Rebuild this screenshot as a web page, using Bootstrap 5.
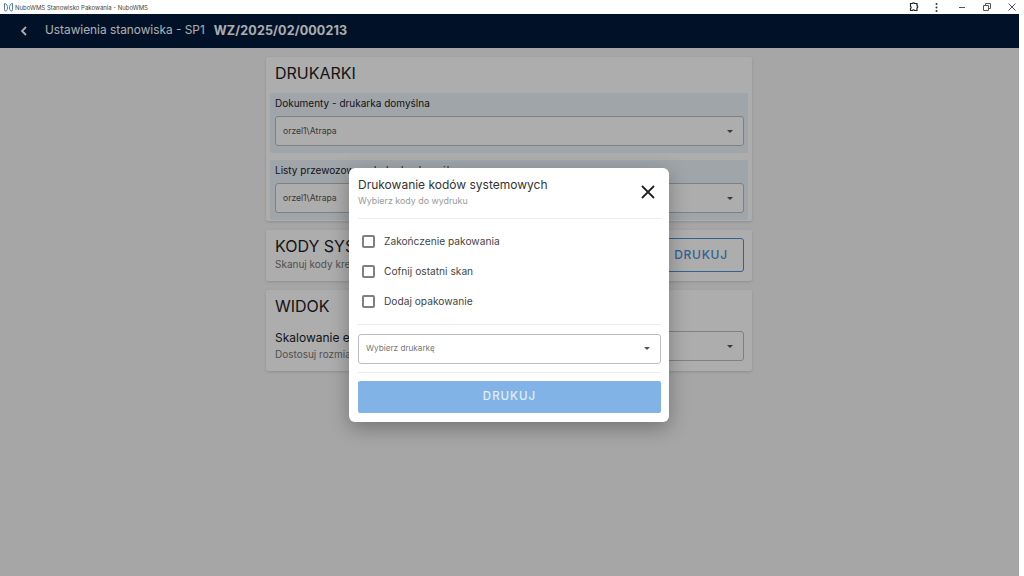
<!DOCTYPE html>
<html lang="pl">
<head>
  <meta charset="UTF-8">
  <meta name="viewport" content="width=device-width, initial-scale=1">
  <title>NuboWMS Stanowisko Pakowania - NuboWMS</title>
  <link href="https://cdn.jsdelivr.net/npm/bootstrap@5.3.2/dist/css/bootstrap.min.css" rel="stylesheet">
  <style>
    html, body {
      height: 100%;
      overflow: hidden;
    }
    body {
      background: #fff;
      font-family: "Inter", "Liberation Sans", sans-serif;
      color: #212121;
    }
    .win-bar {
      height: 14px;
      font-size: 6px;
      color: #444;
      padding-left: 4px;
    }
    .win-logo {
      margin-right: 2px;
    }
    .win-btn {
      width: 25px;
      height: 14px;
    }
    .app-shell {
      width: 1019px;
      height: 562px;
      background: #f5f5f5;
      position: relative;
    }
    .app-top {
      height: 34px;
      background: #001a3c;
      color: #fff;
      padding-left: 20px;
      font-size: 11.850px;
    }
    .app-top b {
      font-size: 12.500px;
      font-weight: 700;
      letter-spacing: .15px;
      margin-left: 9px;
    }
    .back-arrow {
      width: 8px;
      height: 12px;
      margin-right: 17px;
    }
    .page-col {
      width: 486px;
      margin: 9px 0 0 266px;
      gap: 9px;
    }
    .set-card {
      background: #fff;
      border: 0;
      border-radius: 2px;
      box-shadow: 0 1px 3px rgba(0, 0, 0, .15);
    }
    .card-one {
      height: 164px;
    }
    .card-two {
      height: 51px;
      padding: 6px 8px 0 9px;
    }
    .card-three {
      height: 81px;
      padding: 6px 8px 0 9px;
    }
    .card-ttl {
      font-size: 16px;
      font-weight: 400;
      line-height: 20px;
      margin: 0;
    }
    .card-one .card-ttl {
      padding: 6px 0 0 9px;
      margin-bottom: 10px;
    }
    .card-sub {
      font-size: 10px;
      line-height: 14px;
      margin-top: 1px;
      color: #777;
    }
    .set-name {
      font-size: 12px;
      line-height: 16px;
    }
    .view-row {
      margin-top: 14px;
    }
    .printer-box {
      background: #ecf3fa;
      margin: 0 4px;
      padding: 0 4px 7px 5px;
      border-radius: 2px;
    }
    .printer-box + .printer-box {
      margin-top: 7px;
    }
    .printer-box label {
      font-size: 10px;
      line-height: 20px;
      margin-bottom: 3px;
      display: block;
    }
    .sel-box {
      height: 30px;
      background: #fff;
      border: 1px solid #bdbdbd;
      border-radius: 3px;
      padding: 0 10px 0 7px;
      font-size: 8.600px;
      color: #555;
    }
    .sel-box-wide {
      width: 170px;
    }
    .hint-text {
      font-size: 8.200px;
      color: #777;
    }
    .sel-caret {
      width: 0;
      height: 0;
      border-left: 3px solid transparent;
      border-right: 3px solid transparent;
      border-top: 3px solid #555;
    }
    .btn-print-out {
      width: 86px;
      height: 34px;
      margin-top: 2px;
      font-size: 12px;
      font-weight: 500;
      letter-spacing: .7px;
      color: #4a90d9;
      border: 1px solid #4a90d9;
      border-radius: 3px;
      padding: 0;
    }
    .dim-layer {
      position: absolute;
      inset: 0;
      padding: 0 1px 1px 0;
      background: rgba(0, 0, 0, .32);
    }
    .print-dlg {
      width: 320px;
      height: 254px;
      background: #fff;
      border-radius: 6px;
      padding: 8px 8px 8px 9px;
      box-shadow: 0 6px 20px rgba(0, 0, 0, .3);
    }
    .dlg-ttl {
      font-size: 12px;
      font-weight: 400;
      line-height: 18px;
      margin: 0;
      color: #333;
    }
    .dlg-sub {
      font-size: 8.900px;
      line-height: 13px;
      color: #999;
    }
    .dlg-close {
      margin: 9px 6px 0 0;
    }
    .dlg-line {
      margin: 0;
      border-color: #ececec;
      opacity: 1;
    }
    .line-a {
      margin: 11px 0 8px;
    }
    .line-b {
      margin: 7px 0 9px;
    }
    .line-c {
      margin: 8px 0;
    }
    .dlg-check {
      height: 30px;
      padding-left: 4px;
      font-size: 10.200px;
      color: #444;
      gap: 9px;
    }
    .dlg-check .form-check-input {
      width: 13px;
      height: 13px;
      margin: 0;
      border: 2px solid #808080;
      border-radius: 2px;
    }
    .btn-print-main {
      height: 32px;
      font-size: 11.500px;
      font-weight: 500;
      letter-spacing: 1px;
      padding: 0;
      border: 0;
      border-radius: 2px;
      --bs-btn-disabled-bg: #82b3e6;
      --bs-btn-disabled-color: #e3eefa;
      --bs-btn-disabled-opacity: 1;
    }
  </style>
</head>
<body>

<div class="win-bar d-flex align-items-center justify-content-between">
  <div class="d-flex align-items-center">
    <svg class="win-logo" width="9" height="10" viewBox="0 0 9 10" fill="none" stroke="#3a6ea5" stroke-width=".9"><path d="M.5 1.500c2 0 3 2 3 4.500 0 2-1 3-2 3s-1-1-1-3zM8.500 1.500c-2 0-3 2-3 4.500 0 2 1 3 2 3s1-1 1-3z"/></svg>
    <span>NuboWMS Stanowisko Pakowania - NuboWMS</span>
  </div>
  <div class="d-flex">
    <div class="win-btn d-flex align-items-center justify-content-center">
      <svg class="ms-1" width="10" height="10" viewBox="0 0 10 10" fill="none" stroke="#222" stroke-width="1.200"><path d="M1.500 1.500h2c.3-1 1.700-1 2 0h2.500v2.300c1 .3 1 1.900 0 2.200v2.500h-2.500c-.3-1-1.700-1-2 0h-2v-2c.8-.4.8-1.600 0-2z"/></svg>
    </div>
    <div class="win-btn d-flex align-items-center justify-content-center">
      <svg width="3" height="9" viewBox="0 0 3 9" fill="#333"><circle cx="1.500" cy="1" r="1"/><circle cx="1.500" cy="4.500" r="1"/><circle cx="1.500" cy="8" r="1"/></svg>
    </div>
    <div class="win-btn d-flex align-items-center justify-content-center">
      <svg width="8" height="8" viewBox="0 0 8 8" stroke="#555"><path d="M1 4.500h6"/></svg>
    </div>
    <div class="win-btn d-flex align-items-center justify-content-center">
      <svg width="8" height="8" viewBox="0 0 8 8" fill="none" stroke="#555"><path d="M.5 2.500h5v5h-5zM2.500 2.500v-2h5v5h-2"/></svg>
    </div>
    <div class="win-btn d-flex align-items-center justify-content-center">
      <svg width="8" height="8" viewBox="0 0 8 8" stroke="#555"><path d="M.5.500l7 7M7.500.500l-7 7"/></svg>
    </div>
  </div>
</div>

<div class="app-shell">
  <div class="app-top d-flex align-items-center">
    <svg class="back-arrow" viewBox="0 0 8 12" fill="none" stroke="#fff" stroke-width="1.800"><path d="M6 2L2 6l4 4"/></svg>
    <span>Ustawienia stanowiska - SP1</span>
    <b>WZ/2025/02/000213</b>
  </div>

  <div class="page-col d-flex flex-column">
    <div class="card set-card card-one">
      <h2 class="card-ttl">DRUKARKI</h2>
      <div class="printer-box">
        <label>Dokumenty - drukarka domyślna</label>
        <div class="sel-box d-flex align-items-center justify-content-between"><span>orzel1\Atrapa</span><i class="sel-caret"></i></div>
      </div>
      <div class="printer-box">
        <label>Listy przewozowe - drukarka domyślna</label>
        <div class="sel-box d-flex align-items-center justify-content-between"><span>orzel1\Atrapa</span><i class="sel-caret"></i></div>
      </div>
    </div>

    <div class="card set-card card-two flex-row align-items-start justify-content-between">
      <div>
        <h2 class="card-ttl">KODY SYSTEMOWE</h2>
        <div class="card-sub">Skanuj kody kreskowe</div>
      </div>
      <button class="btn btn-print-out" type="button">DRUKUJ</button>
    </div>

    <div class="card set-card card-three">
      <h2 class="card-ttl">WIDOK</h2>
      <div class="view-row d-flex align-items-end justify-content-between">
        <div>
          <div class="set-name">Skalowanie ekranu</div>
          <div class="card-sub">Dostosuj rozmiar</div>
        </div>
        <div class="sel-box sel-box-wide d-flex align-items-center justify-content-end"><i class="sel-caret"></i></div>
      </div>
    </div>
  </div>

  <div class="dim-layer d-flex align-items-center justify-content-center">
    <div class="print-dlg d-flex flex-column">
      <div class="d-flex justify-content-between align-items-start">
        <div>
          <h5 class="dlg-ttl">Drukowanie kodów systemowych</h5>
          <div class="dlg-sub">Wybierz kody do wydruku</div>
        </div>
        <svg class="dlg-close" width="14" height="14" viewBox="0 0 14 14" stroke="#222" stroke-width="1.800"><path d="M1 1l12 12M13 1L1 13"/></svg>
      </div>
      <hr class="dlg-line line-a">
      <div>
        <label class="dlg-check d-flex align-items-center"><input class="form-check-input" type="checkbox"> Zakończenie pakowania</label>
        <label class="dlg-check d-flex align-items-center"><input class="form-check-input" type="checkbox"> Cofnij ostatni skan</label>
        <label class="dlg-check d-flex align-items-center"><input class="form-check-input" type="checkbox"> Dodaj opakowanie</label>
      </div>
      <hr class="dlg-line line-b">
      <div class="sel-box d-flex align-items-center justify-content-between"><span class="hint-text">Wybierz drukarkę</span><i class="sel-caret"></i></div>
      <hr class="dlg-line line-c">
      <button class="btn btn-primary btn-print-main" type="button" disabled>DRUKUJ</button>
    </div>
  </div>
</div>

<script src="https://cdn.jsdelivr.net/npm/bootstrap@5.3.2/dist/js/bootstrap.bundle.min.js"></script>
</body>
</html>
